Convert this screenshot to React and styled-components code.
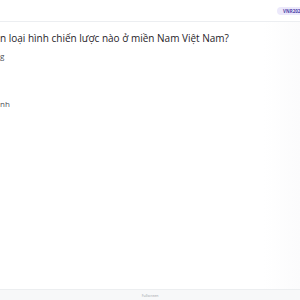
import React from 'react';
import styled, { createGlobalStyle } from 'styled-components';

const GlobalStyle = createGlobalStyle`
  html, body { margin: 0; padding: 0; }
  body { font-family: "Open Sans", "Noto Sans", sans-serif; background: #ffffff; }
`;

const Page = styled.div`
  width: 300px;
  height: 300px;
  display: flex;
  flex-direction: column;
  overflow: hidden;
  background: #ffffff;
`;

const Header = styled.header`
  height: 21px;
  flex-shrink: 0;
  display: flex;
  justify-content: flex-end;
  align-items: center;
  border-bottom: 1px solid #eceef1;
  box-shadow: 0 1px 2px rgba(0, 0, 0, 0.02);
`;

const Badge = styled.span`
  margin-right: -10px;
  padding: 1px 6px;
  border-radius: 6px;
  background: #ece9fb;
  color: #4b3fa8;
  font-size: 4.5px;
  font-weight: 700;
  white-space: nowrap;
  line-height: 6px;
`;

const Body = styled.main`
  flex: 1;
  display: flex;
  flex-direction: column;
  padding-top: 9px;
  background: linear-gradient(90deg, #ffffff 88%, #fbfbfc 100%);
`;

const Question = styled.h2`
  margin: 0;
  font-size: 10px;
  font-weight: 500;
  color: #1f2328;
  line-height: 14px;
  white-space: nowrap;
`;

const Option = styled.div`
  margin-top: ${p => p.$gap}px;
  font-size: 8px;
  color: #4a4f57;
  line-height: 10px;
`;

const Footer = styled.footer`
  height: 10px;
  flex-shrink: 0;
  display: flex;
  align-items: center;
  justify-content: center;
  background: #f7f8f9;
  border-top: 1px solid #eceef0;
  font-size: 3.5px;
  color: #9aa0a6;
`;

export default function App() {
  return (
    <Page>
      <GlobalStyle />
      <Header>
        <Badge>VNR202 S</Badge>
      </Header>
      <Body>
        <Question>n loại hình chiến lược nào ở miền Nam Việt Nam?</Question>
        <Option $gap={6}>g</Option>
        <Option $gap={38}>nh</Option>
      </Body>
      <Footer>Fullscreen</Footer>
    </Page>
  );
}
